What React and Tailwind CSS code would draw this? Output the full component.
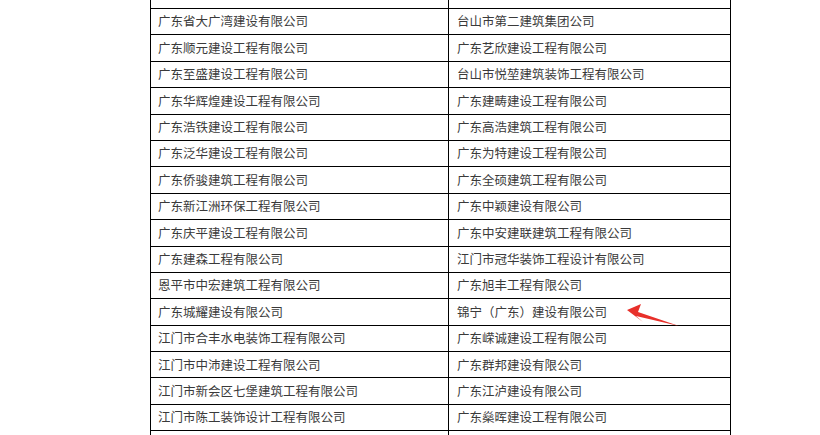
import React from 'react'

const rows = [
  ['', ''],
  ['广东省大广湾建设有限公司', '台山市第二建筑集团公司'],
  ['广东顺元建设工程有限公司', '广东艺欣建设工程有限公司'],
  ['广东至盛建设工程有限公司', '台山市悦堃建筑装饰工程有限公司'],
  ['广东华辉煌建设工程有限公司', '广东建畴建设工程有限公司'],
  ['广东浩铁建设工程有限公司', '广东高浩建筑工程有限公司'],
  ['广东泛华建设工程有限公司', '广东为特建设工程有限公司'],
  ['广东侨骏建筑工程有限公司', '广东全硕建筑工程有限公司'],
  ['广东新江洲环保工程有限公司', '广东中颖建设有限公司'],
  ['广东庆平建设工程有限公司', '广东中安建联建筑工程有限公司'],
  ['广东建森工程有限公司', '江门市冠华装饰工程设计有限公司'],
  ['恩平市中宏建筑工程有限公司', '广东旭丰工程有限公司'],
  ['广东城耀建设有限公司', '锦宁（广东）建设有限公司'],
  ['江门市合丰水电装饰工程有限公司', '广东嵘诚建设工程有限公司'],
  ['江门市中沛建设工程有限公司', '广东群邦建设有限公司'],
  ['江门市新会区七堡建筑工程有限公司', '广东江泸建设有限公司'],
  ['江门市陈工装饰设计工程有限公司', '广东燊晖建设工程有限公司'],
  ['', ''],
]

export default function App() {
  return (
    <div className="relative w-[820px] h-[435px] overflow-hidden bg-white font-['Noto_Sans_CJK_SC',sans-serif]">
      <table className="ml-[150px] -mt-[18.4px] border-collapse table-fixed w-[580px] text-[12.5px] text-[#3a3a3a]">
        <colgroup>
          <col className="w-[298px]" />
          <col className="w-[282px]" />
        </colgroup>
        <tbody>
          {rows.map((r, i) => (
            <tr key={i} className="h-[26.4px]">
              <td className="border border-black pl-[7px] py-0 align-middle leading-none whitespace-nowrap">{r[0]}</td>
              <td className="border border-black pl-[8px] py-0 align-middle leading-none whitespace-nowrap">{r[1]}</td>
            </tr>
          ))}
        </tbody>
      </table>
      {/* red arrow pointing at 锦宁 */}
      <svg className="absolute left-0 top-0" width="820" height="435" viewBox="0 0 820 435">
        <polygon points="627,310 641,304 638,312 679,326 636,316 643,322" fill="#e8302a" />
      </svg>
    </div>
  )
}
